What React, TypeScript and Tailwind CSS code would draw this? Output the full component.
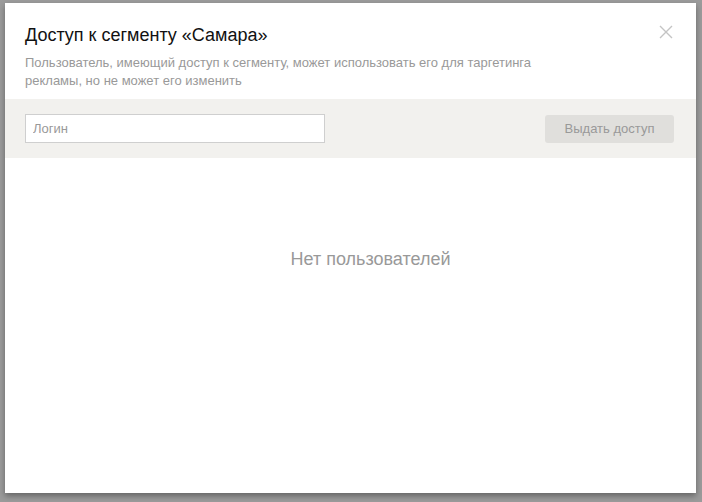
import React from "react";

export default function App() {
  return (
    <div className="w-[702px] h-[502px] bg-[#9b9b9b] overflow-hidden pt-[3px] pl-[5px]" style={{ fontFamily: '"Liberation Sans", Arial, sans-serif' }}>
      <div className="relative w-[691px] h-[490px] bg-white shadow-[0_3px_6px_rgba(0,0,0,0.35)] flex flex-col">
        <button className="absolute right-[22px] top-[21px] w-[16px] h-[16px] flex items-center justify-center">
          <svg width="16" height="16" viewBox="0 0 16 16" fill="none" stroke="#c4c4c4" strokeWidth="1.4">
            <path d="M2 2 L14 14 M14 2 L2 14" />
          </svg>
        </button>
        <div className="px-[20px] pt-[20px] pb-[9px]">
          <h1 className="text-[18px] leading-[24px] text-[#111]">Доступ к сегменту «Самара»</h1>
          <p className="mt-[7px] text-[13px] leading-[18px] text-[#999] w-[540px]">
            Пользователь, имеющий доступ к сегменту, может использовать его для таргетинга рекламы, но не может его изменить
          </p>
        </div>
        <div className="h-[59px] bg-[#f2f1ee] flex items-center justify-between px-[20px]">
          <input
            placeholder="Логин"
            className="w-[300px] h-[29px] border border-[#cfcfcf] bg-white px-[7px] text-[13px] text-[#333] placeholder:text-[#999] outline-none"
          />
          <button className="w-[129px] h-[28px] mr-[2px] rounded-[3px] bg-[#e0dfdc] text-[13px] text-[#999]">Выдать доступ</button>
        </div>
        <div className="flex-1 flex items-start justify-center pt-[89px] pl-[40px]">
          <span className="text-[18px] leading-[24px] text-[#999]">Нет пользователей</span>
        </div>
      </div>
    </div>
  );
}
